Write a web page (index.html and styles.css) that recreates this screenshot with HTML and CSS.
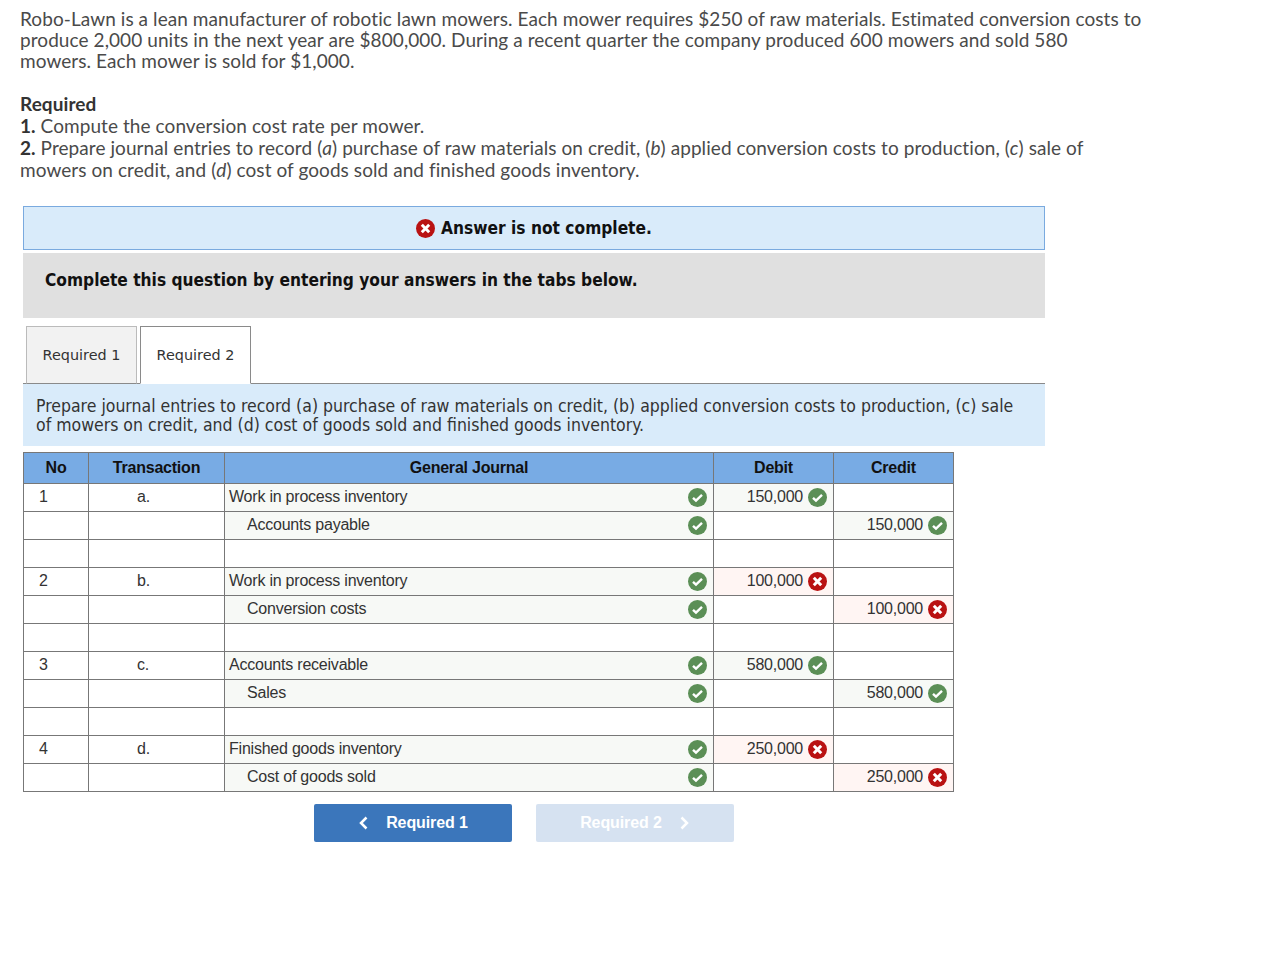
FILE: index.html
```html
<!DOCTYPE html>
<html lang="en">
<head>
<meta charset="utf-8">
<title>Robo-Lawn</title>
<link rel="stylesheet" href="styles.css">
</head>
<body>
<svg class="defs" width="0" height="0" aria-hidden="true">
  <symbol id="ok" viewBox="0 0 19 19"><circle cx="9.5" cy="9.5" r="9.5" fill="#5b8f56"/><path d="M5 9.800l3 2.900 6-5.800" fill="none" stroke="#fff" stroke-width="2.400"/></symbol>
  <symbol id="no" viewBox="0 0 19 19"><circle cx="9.5" cy="9.5" r="9.5" fill="#b91212"/><path d="M5.800 5.800l7.400 7.400M13.200 5.800l-7.400 7.400" fill="none" stroke="#fff" stroke-width="3"/></symbol>
</svg>
<main class="page">
  <section class="question">
    <p class="intro">Robo-Lawn is a lean manufacturer of robotic lawn mowers. Each mower requires $250 of raw materials. Estimated conversion costs to produce 2,000 units in the next year are $800,000. During a recent quarter the company produced 600 mowers and sold 580 mowers. Each mower is sold for $1,000.</p>
    <div class="required">
      <div class="req-title">Required</div>
      <div><b>1.</b> Compute the conversion cost rate per mower.</div>
      <div><b>2.</b> Prepare journal entries to record (<i>a</i>) purchase of raw materials on credit, (<i>b</i>) applied conversion costs to production, (<i>c</i>) sale of mowers on credit, and (<i>d</i>) cost of goods sold and finished goods inventory.</div>
    </div>
  </section>

  <div class="answer">
    <div class="status"><svg class="ico"><use href="#no"/></svg><span>Answer is not complete.</span></div>
    <div class="complete">Complete this question by entering your answers in the tabs below.</div>
    <div class="tabs">
      <div class="tab">Required 1</div>
      <div class="tab active">Required 2</div>
    </div>
    <div class="instr">Prepare journal entries to record (a) purchase of raw materials on credit, (b) applied conversion costs to production, (c) sale of mowers on credit, and (d) cost of goods sold and finished goods inventory.</div>

    <table class="journal">
      <colgroup><col class="c-no"><col class="c-tr"><col class="c-gj"><col class="c-am"><col class="c-am"></colgroup>
      <thead><tr><th>No</th><th>Transaction</th><th>General Journal</th><th>Debit</th><th>Credit</th></tr></thead>
      <tbody>
        <tr><td class="no">1</td><td class="tr">a.</td><td class="good"><div class="gj"><span>Work in process inventory</span><svg class="ico"><use href="#ok"/></svg></div></td><td class="good"><div class="am"><span>150,000</span><svg class="ico"><use href="#ok"/></svg></div></td><td></td></tr>
        <tr><td></td><td></td><td class="good"><div class="gj"><span class="ind">Accounts payable</span><svg class="ico"><use href="#ok"/></svg></div></td><td></td><td class="good"><div class="am"><span>150,000</span><svg class="ico"><use href="#ok"/></svg></div></td></tr>
        <tr><td></td><td></td><td></td><td></td><td></td></tr>
        <tr><td class="no">2</td><td class="tr">b.</td><td class="good"><div class="gj"><span>Work in process inventory</span><svg class="ico"><use href="#ok"/></svg></div></td><td class="bad"><div class="am"><span>100,000</span><svg class="ico"><use href="#no"/></svg></div></td><td></td></tr>
        <tr><td></td><td></td><td class="good"><div class="gj"><span class="ind">Conversion costs</span><svg class="ico"><use href="#ok"/></svg></div></td><td></td><td class="bad"><div class="am"><span>100,000</span><svg class="ico"><use href="#no"/></svg></div></td></tr>
        <tr><td></td><td></td><td></td><td></td><td></td></tr>
        <tr><td class="no">3</td><td class="tr">c.</td><td class="good"><div class="gj"><span>Accounts receivable</span><svg class="ico"><use href="#ok"/></svg></div></td><td class="good"><div class="am"><span>580,000</span><svg class="ico"><use href="#ok"/></svg></div></td><td></td></tr>
        <tr><td></td><td></td><td class="good"><div class="gj"><span class="ind">Sales</span><svg class="ico"><use href="#ok"/></svg></div></td><td></td><td class="good"><div class="am"><span>580,000</span><svg class="ico"><use href="#ok"/></svg></div></td></tr>
        <tr><td></td><td></td><td></td><td></td><td></td></tr>
        <tr><td class="no">4</td><td class="tr">d.</td><td class="good"><div class="gj"><span>Finished goods inventory</span><svg class="ico"><use href="#ok"/></svg></div></td><td class="bad"><div class="am"><span>250,000</span><svg class="ico"><use href="#no"/></svg></div></td><td></td></tr>
        <tr><td></td><td></td><td class="good"><div class="gj"><span class="ind">Cost of goods sold</span><svg class="ico"><use href="#ok"/></svg></div></td><td></td><td class="bad"><div class="am"><span>250,000</span><svg class="ico"><use href="#no"/></svg></div></td></tr>
      </tbody>
    </table>

    <div class="nav">
      <div class="btn prev"><svg class="chev" viewBox="0 0 10 14"><path d="M8.500 1.500L3 7l5.500 5.500" fill="none" stroke="currentColor" stroke-width="2.500"/></svg><span>Required 1</span></div>
      <div class="btn next"><span>Required 2</span><svg class="chev" viewBox="0 0 10 14"><path d="M1.500 1.500L7 7l-5.500 5.500" fill="none" stroke="currentColor" stroke-width="2.500"/></svg></div>
    </div>
  </div>
</main>
</body>
</html>
```
FILE: styles.css
```css
* { box-sizing: border-box; }
html, body { margin: 0; background: #fff; }
.defs { position: absolute; }
.page { padding: 8px 0 0 20px; color: #222; }
.question { width: 1122px; font-family: Lato, sans-serif; font-size: 19px; letter-spacing: .07px; color: #4a4a4a; }
.intro { margin: 0; line-height: 21px; }
.required { margin-top: 22px; line-height: 22px; }
.req-title { font-weight: 700; color: #333; }
.required b { font-weight: 700; color: #333; }
.answer { margin: 25px 0 0 3px; width: 1022px; }
.ico { width: 19px; height: 19px; flex: none; display: block; }
.status { height: 44px; background: #d9ebfa; border: 1px solid #7aaadf; display: flex; align-items: center; justify-content: center; gap: 6px; font: 700 17.2px "DejaVu Sans Condensed", "DejaVu Sans", sans-serif; font-stretch: condensed; color: #111; }
.complete { margin-top: 3px; height: 65px; background: #e0e0e0; padding: 17px 22px 0; font: 700 17.2px/20px "DejaVu Sans Condensed", "DejaVu Sans", sans-serif; font-stretch: condensed; color: #111; }
.tabs { margin-top: 8px; padding-left: 3px; display: flex; gap: 3px; border-bottom: 1px solid #8a8a8a; height: 58px; }
.tab { width: 111px; height: 58px; background: #f2f2f2; border: 1px solid #bbb; border-bottom: 1px solid #8a8a8a; font: 14.4px/56px "DejaVu Sans", sans-serif; text-align: center; color: #333; }
.tab.active { background: #fff; border-color: #8a8a8a; border-bottom-color: #fff; height: 58px; }
.instr { background: #d9ebfa; height: 62px; padding: 13px 12px 0 13px; font: 17.5px/19px "DejaVu Sans Condensed", "DejaVu Sans", sans-serif; font-stretch: condensed; color: #333; }
.journal { margin-top: 6px; width: 931px; table-layout: fixed; border-collapse: collapse; font: 16px "Liberation Sans", sans-serif; letter-spacing: -.22px; color: #333; }
.c-no { width: 65px; } .c-tr { width: 136px; } .c-gj { width: 489px; } .c-am { width: 120px; }
.journal th { height: 31px; background: #78abe4; border: 1px solid #777; font-weight: 700; color: #111; padding: 0; }
.journal td { height: 28px; border: 1px solid #777; padding: 0; }
td.no { padding-left: 15px; vertical-align: top; line-height: 25px; }
td.tr { padding-left: 48px; vertical-align: top; line-height: 25px; }
td.good { background: #f7f9f6; }
td.bad { background: #fff5f3; }
.gj, .am { display: flex; align-items: center; height: 27px; padding: 0 6px 0 4px; }
.gj { justify-content: space-between; }
.am { justify-content: flex-end; gap: 5px; }
.gj span, .am span { position: relative; top: -1px; }
.ind { margin-left: 18px; }
.nav { margin-top: 12px; width: 1002px; display: flex; justify-content: center; gap: 24px; }
.btn { width: 198px; height: 38px; border-radius: 2px; display: flex; align-items: center; justify-content: center; gap: 18px; color: #fff; font: 700 16px "Liberation Sans", sans-serif; letter-spacing: -.1px; }
.prev { background: #3b76bb; }
.next { background: #d6e2f1; }
.chev { width: 10px; height: 14px; }
```
